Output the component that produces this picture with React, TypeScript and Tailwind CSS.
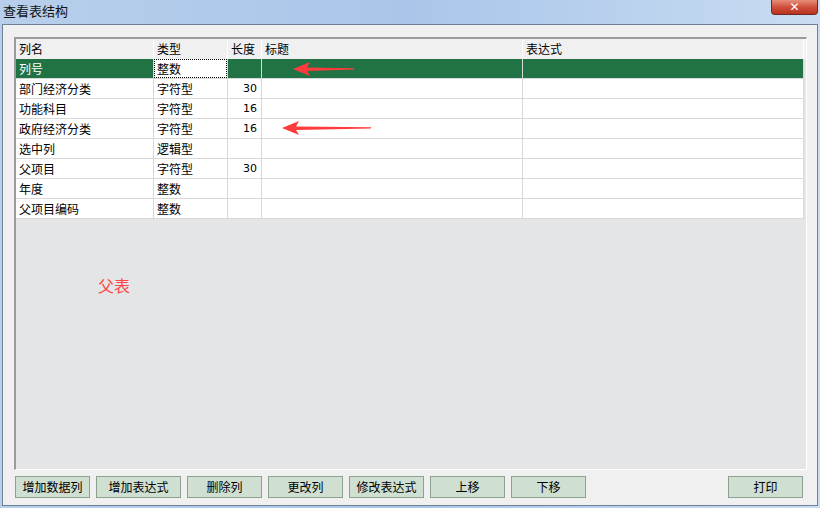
import React from "react";

type Row = { name: string; type: string; len?: string };

const rows: Row[] = [
  { name: "列号", type: "整数" },
  { name: "部门经济分类", type: "字符型", len: "30" },
  { name: "功能科目", type: "字符型", len: "16" },
  { name: "政府经济分类", type: "字符型", len: "16" },
  { name: "选中列", type: "逻辑型" },
  { name: "父项目", type: "字符型", len: "30" },
  { name: "年度", type: "整数" },
  { name: "父项目编码", type: "整数" },
];

const buttons = ["增加数据列", "增加表达式", "删除列", "更改列", "修改表达式", "上移", "下移"];

const font = { fontFamily: '"Noto Sans CJK SC", "Liberation Sans", sans-serif' };

const Arrow: React.FC<{ className: string; w: number }> = ({ className, w }) => (
  <svg className={className} width={w} height="16" viewBox={`0 0 ${w} 16`}>
    <path d={`M0 8 L17 1 L14 6.5 L${w} 7.2 L${w} 8.4 L14 10 L17 15 Z`} fill="#ff3b3b" />
  </svg>
);

const App: React.FC = () => {
  return (
    <div className="relative w-[820px] h-[508px] flex flex-col bg-gradient-to-r from-[#b7cfea] via-[#a9c6ea] to-[#c9dcf1] text-[12px] text-black" style={font}>
      {/* title bar */}
      <div className="h-[24px] flex items-start justify-between pl-[3px] pr-[2px]">
        <span className="mt-[3px] text-[13px] leading-[16px] text-[#111]">查看表结构</span>
        <div className="w-[47px] h-[15px] rounded-b-[4px] border border-t-0 border-[#6e2a22] bg-gradient-to-b from-[#e58e7b] via-[#cf4f3c] to-[#b9321f] flex items-center justify-center">
          <span className="text-white text-[12px] font-bold leading-none" style={{ fontFamily: '"DejaVu Sans", sans-serif' }}>✕</span>
        </div>
      </div>

      {/* client area */}
      <div className="flex-1 mx-[2px] mb-[2px] border border-[#6f8196] bg-[#f0f0f0] flex flex-col pl-[11px] pr-[10px] pt-[12px] pb-[6px]">
        <div className="h-[433px] border-t-2 border-l-2 border-[#9b9b9b] border-r border-b border-r-white border-b-white bg-[#e4e5e7] flex flex-col">
          {/* header */}
          <div className="flex h-[20px] bg-[#f0f0f0] leading-[19px]">
            <div className="w-[138px] pl-[3px] border-r border-white">列名</div>
            <div className="w-[74px] pl-[3px] border-r border-white">类型</div>
            <div className="w-[34px] pl-[3px] border-r border-white">长度</div>
            <div className="w-[261px] pl-[3px] border-r border-white">标题</div>
            <div className="w-[281px] pl-[3px] border-r border-white">表达式</div>
          </div>
          {rows.map((r, i) => {
            const sel = i === 0;
            const cell = sel ? "bg-[#217346]" : "bg-white";
            return (
              <div key={r.name} className="flex h-[20px] leading-[19px]">
                <div className={`w-[138px] pl-[3px] border-r border-b border-[#d8d8d8] ${cell} ${sel ? "text-white" : ""}`}>{r.name}</div>
                <div className={`w-[74px] pl-[3px] border-r border-b border-[#d8d8d8] bg-white`}>
                  <div className={`h-full ${sel ? "border border-dotted border-black -ml-[3px] pl-[2px] leading-[17px]" : ""}`}>{r.type}</div>
                </div>
                <div className={`w-[34px] pr-[4px] text-right text-[11px] border-r border-b border-[#d8d8d8] ${cell}`} style={{ fontFamily: '"DejaVu Sans", sans-serif' }}>{r.len ?? ""}</div>
                <div className={`w-[261px] border-r border-b border-[#d8d8d8] ${cell}`} />
                <div className={`w-[281px] border-r border-b border-[#d8d8d8] ${cell}`} />
              </div>
            );
          })}
          <div className="flex-1 pl-[82px] pt-[54px]">
            <span className="text-[16px] text-[#ff4646]">父表</span>
          </div>
        </div>

        {/* buttons */}
        <div className="flex mt-[6px] h-[22px] pl-[1px]">
          {buttons.map((b, i) => (
            <button
              key={b}
              className={`${i === 1 ? "w-[85px]" : "w-[75px]"} h-[22px] mr-[6px] border border-[#8ca18f] bg-[#cfdfd1] leading-[20px] text-[12px] text-black`}
            >
              {b}
            </button>
          ))}
          <div className="flex-1" />
          <button className="w-[75px] h-[22px] mr-[4px] border border-[#8ca18f] bg-[#cfdfd1] leading-[20px] text-[12px] text-black">打印</button>
        </div>
      </div>

      <Arrow className="absolute left-[293px] top-[61px]" w={61} />
      <Arrow className="absolute left-[282px] top-[120px]" w={89} />
    </div>
  );
};

export default App;
